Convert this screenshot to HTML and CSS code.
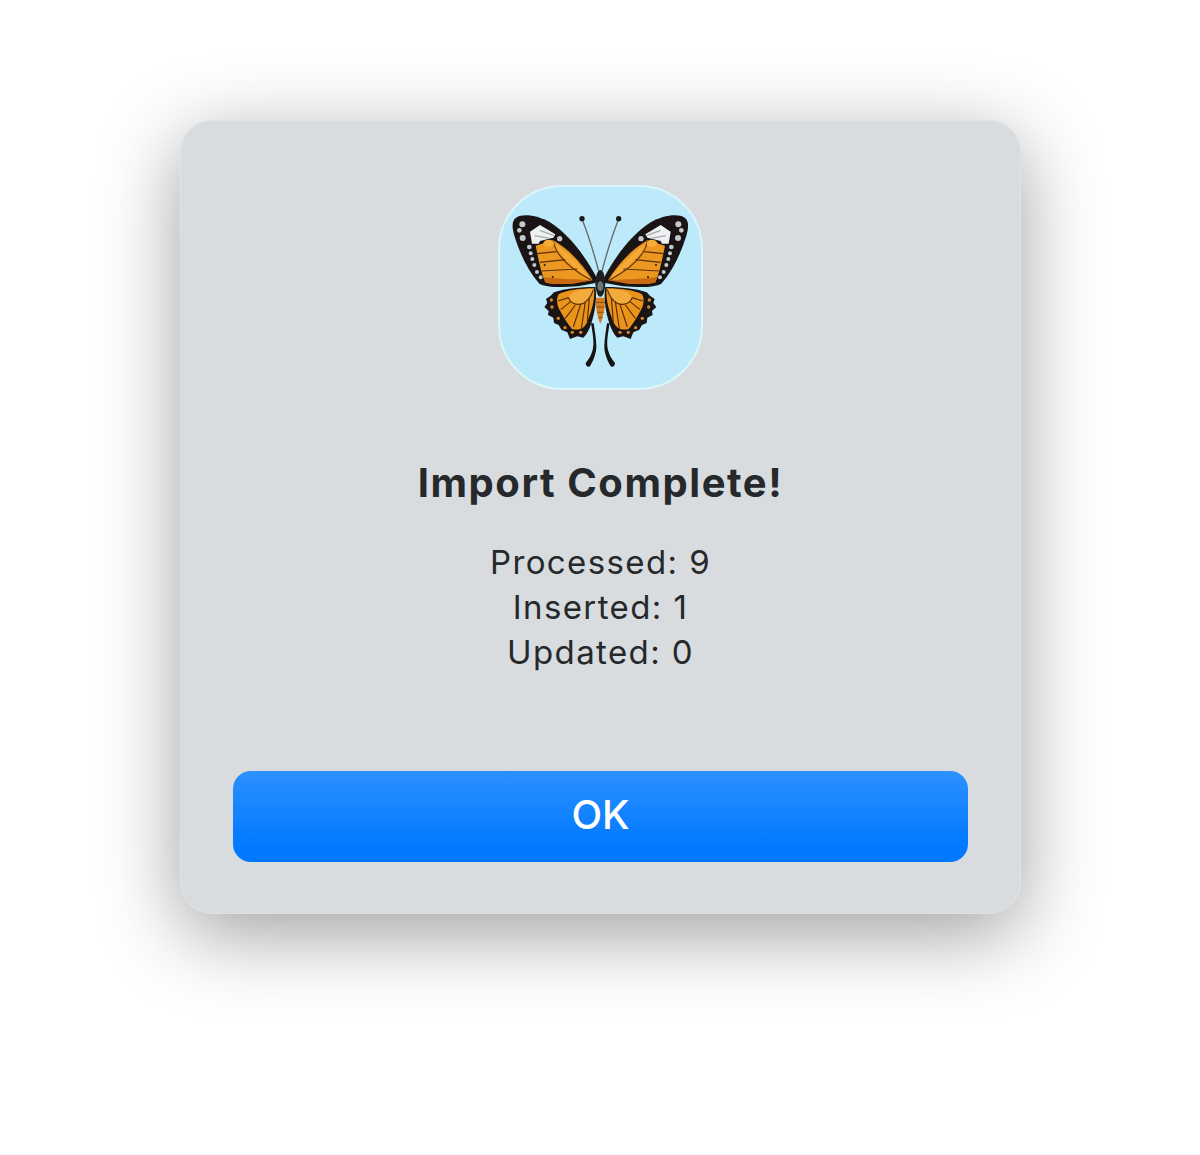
FILE: index.html
```html
<!DOCTYPE html>
<html lang="en">
<head>
  <meta charset="UTF-8">
  <title>Import Complete</title>
  <link rel="stylesheet" href="styles.css">
</head>
<body>

  <div class="dialog">
    <div class="app-icon">
      <svg class="butterfly" viewBox="30 36 603 603" xmlns="http://www.w3.org/2000/svg">
        <defs>
          <g id="half">
            <!-- antenna -->
            <path d="M326 288C312 235 295 180 276 132" fill="none" stroke="#66696b" stroke-width="4"/>
            <circle cx="276" cy="131" r="8" fill="#1b1b1b"/>
            <!-- leg/tail -->
            <path d="M303 445C309 480 313 505 308 525C304 540 297 552 287 564Q288 578 300 574C310 556 320 535 319 510C318 488 314 465 311 445Z" fill="#141414"/>
            <!-- fore wing -->
            <path d="M322 312C290 250 240 180 180 142C145 122 100 114 78 128C64 138 66 160 74 185C88 228 108 280 148 326C170 338 240 342 316 324Z" fill="#1a1514"/>
            <path d="M120 170L150 150L196 178L190 188L150 198L146 206L126 206Z" fill="#eef0f2"/>
            <path d="M150 166L192 182M134 182L180 190" stroke="#a3abb0" stroke-width="4"/>
            <path d="M137 212L190 196C240 225 280 270 308 316L250 324C210 328 180 328 166 322C152 290 145 250 137 212Z" fill="#ec9820"/>
            <path d="M192 206C232 228 270 268 300 310C260 290 215 245 192 206Z" fill="#f4aa36"/>
            <path d="M160 306C200 312 260 312 304 316L250 326C210 328 180 328 166 322Z" fill="#c96a12"/>
            <path d="M190 198C195 230 220 270 304 316M141 236L200 230M150 262L226 254M156 288L262 282" fill="none" stroke="#5a3008" stroke-width="3.5"/>
            <ellipse cx="176" cy="205" rx="16" ry="11" fill="#f5ab36"/>
            <g fill="#1f1608">
              <circle cx="164" cy="270" r="3"/>
              <circle cx="188" cy="306" r="3"/>
            </g>
            <g fill="#c3c9cc">
              <circle cx="97" cy="148" r="9"/>
              <circle cx="88" cy="166" r="7"/>
              <circle cx="98" cy="189" r="9"/>
              <circle cx="209" cy="191" r="8"/>
              <circle cx="118" cy="216" r="7"/>
              <circle cx="122" cy="235" r="6"/>
              <circle cx="127" cy="252" r="6"/>
              <circle cx="133" cy="270" r="6"/>
              <circle cx="141" cy="291" r="6"/>
              <circle cx="152" cy="307" r="6"/>
            </g>
            <!-- hind wing -->
            <path d="M316 336C270 336 225 340 192 352L182 362L168 372L172 384L163 396L176 408L174 420L190 428L192 444L206 450L214 464L232 472L240 492L262 484L280 488C292 478 298 462 304 445C314 415 322 370 316 336Z" fill="#1a1514"/>
            <path d="M312 340C270 340 228 346 206 358C198 372 200 392 212 410C220 425 232 445 246 462C262 466 282 464 292 440C304 410 316 375 312 340Z" fill="#ea941c"/>
            <path d="M312 342C280 342 245 346 236 366C240 385 260 392 278 386C295 378 305 360 312 342Z" fill="#f4ab3e"/>
            <path d="M236 368L204 378M242 380L212 404M256 390L226 430M272 388L250 456M286 380L274 462M298 368L292 440M236 368C240 385 260 392 278 386C295 378 305 360 310 344" fill="none" stroke="#5a2f08" stroke-width="3.5"/>
            <g fill="#d9842a">
              <circle cx="184" cy="375" r="5"/>
              <circle cx="186" cy="396" r="5"/>
              <circle cx="205" cy="430" r="5"/>
              <circle cx="225" cy="458" r="5"/>
              <circle cx="247" cy="472" r="5"/>
              <circle cx="272" cy="472" r="5"/>
            </g>
          </g>
        </defs>
        <use href="#half"/>
        <use href="#half" transform="translate(662 0) scale(-1 1)"/>
        <!-- abdomen -->
        <path d="M318 368H345C346 395 340 425 331 447C322 425 316 395 318 368Z" fill="#d5801f"/>
        <path d="M318 382H345M319 396H344M322 412H341M326 428H337" stroke="#8a4c12" stroke-width="3"/>
        <!-- thorax -->
        <ellipse cx="331" cy="325" rx="15" ry="40" fill="#1e2020"/>
        <ellipse cx="331" cy="334" rx="9" ry="15" fill="#6d7779"/>
      </svg>
    </div>

    <h2 class="dialog-title">Import Complete!</h2>

    <div class="dialog-stats">
      <p>Processed: 9</p>
      <p>Inserted: 1</p>
      <p>Updated: 0</p>
    </div>

    <button class="ok-button" type="button">OK</button>
  </div>

</body>
</html>
```

FILE: styles.css
```css
html, body {
  height: 100%;
}
body {
  margin: 0;
  padding-top: 120px;
  box-sizing: border-box;
  background-color: #ffffff;
  font-family: Inter, "Noto Sans", sans-serif;
  display: flex;
  justify-content: center;
  align-items: flex-start;
}
.dialog {
  width: 841px;
  height: 794px;
  margin-left: 1px;
  padding: 65px 53px 52px;
  box-sizing: border-box;
  display: flex;
  flex-direction: column;
  align-items: center;
  background: #d8dcde;
  border-radius: 32px;
  box-shadow: 0 20px 80px rgba(0, 0, 0, 0.38), inset 0 0 0 1px rgba(255, 255, 255, 0.2);
  color: #25292b;
}
.app-icon {
  width: 205px;
  height: 205px;
  box-sizing: border-box;
  background: #bdeafb;
  border: 2px solid #dcf6fa;
  border-radius: 64px;
  flex-shrink: 0;
}
.butterfly {
  display: block;
  width: 100%;
  height: 100%;
}
.dialog-title {
  margin: 68px 0 0;
  font-size: 40px;
  font-weight: 700;
  line-height: 50px;
  letter-spacing: 1.55px;
}
.dialog-stats {
  margin-top: 32px;
  text-align: center;
  font-size: 33px;
  line-height: 45px;
  letter-spacing: 1.4px;
}
.dialog-stats p {
  margin: 0;
}
.ok-button {
  width: 100%;
  height: 91px;
  margin-top: auto;
  padding: 0 0 4px;
  border: none;
  border-radius: 18px;
  background: linear-gradient(#2c90ff, #0078ff 85%);
  color: #ffffff;
  font-family: inherit;
  font-size: 40px;
  font-weight: 500;
  cursor: pointer;
}
```
